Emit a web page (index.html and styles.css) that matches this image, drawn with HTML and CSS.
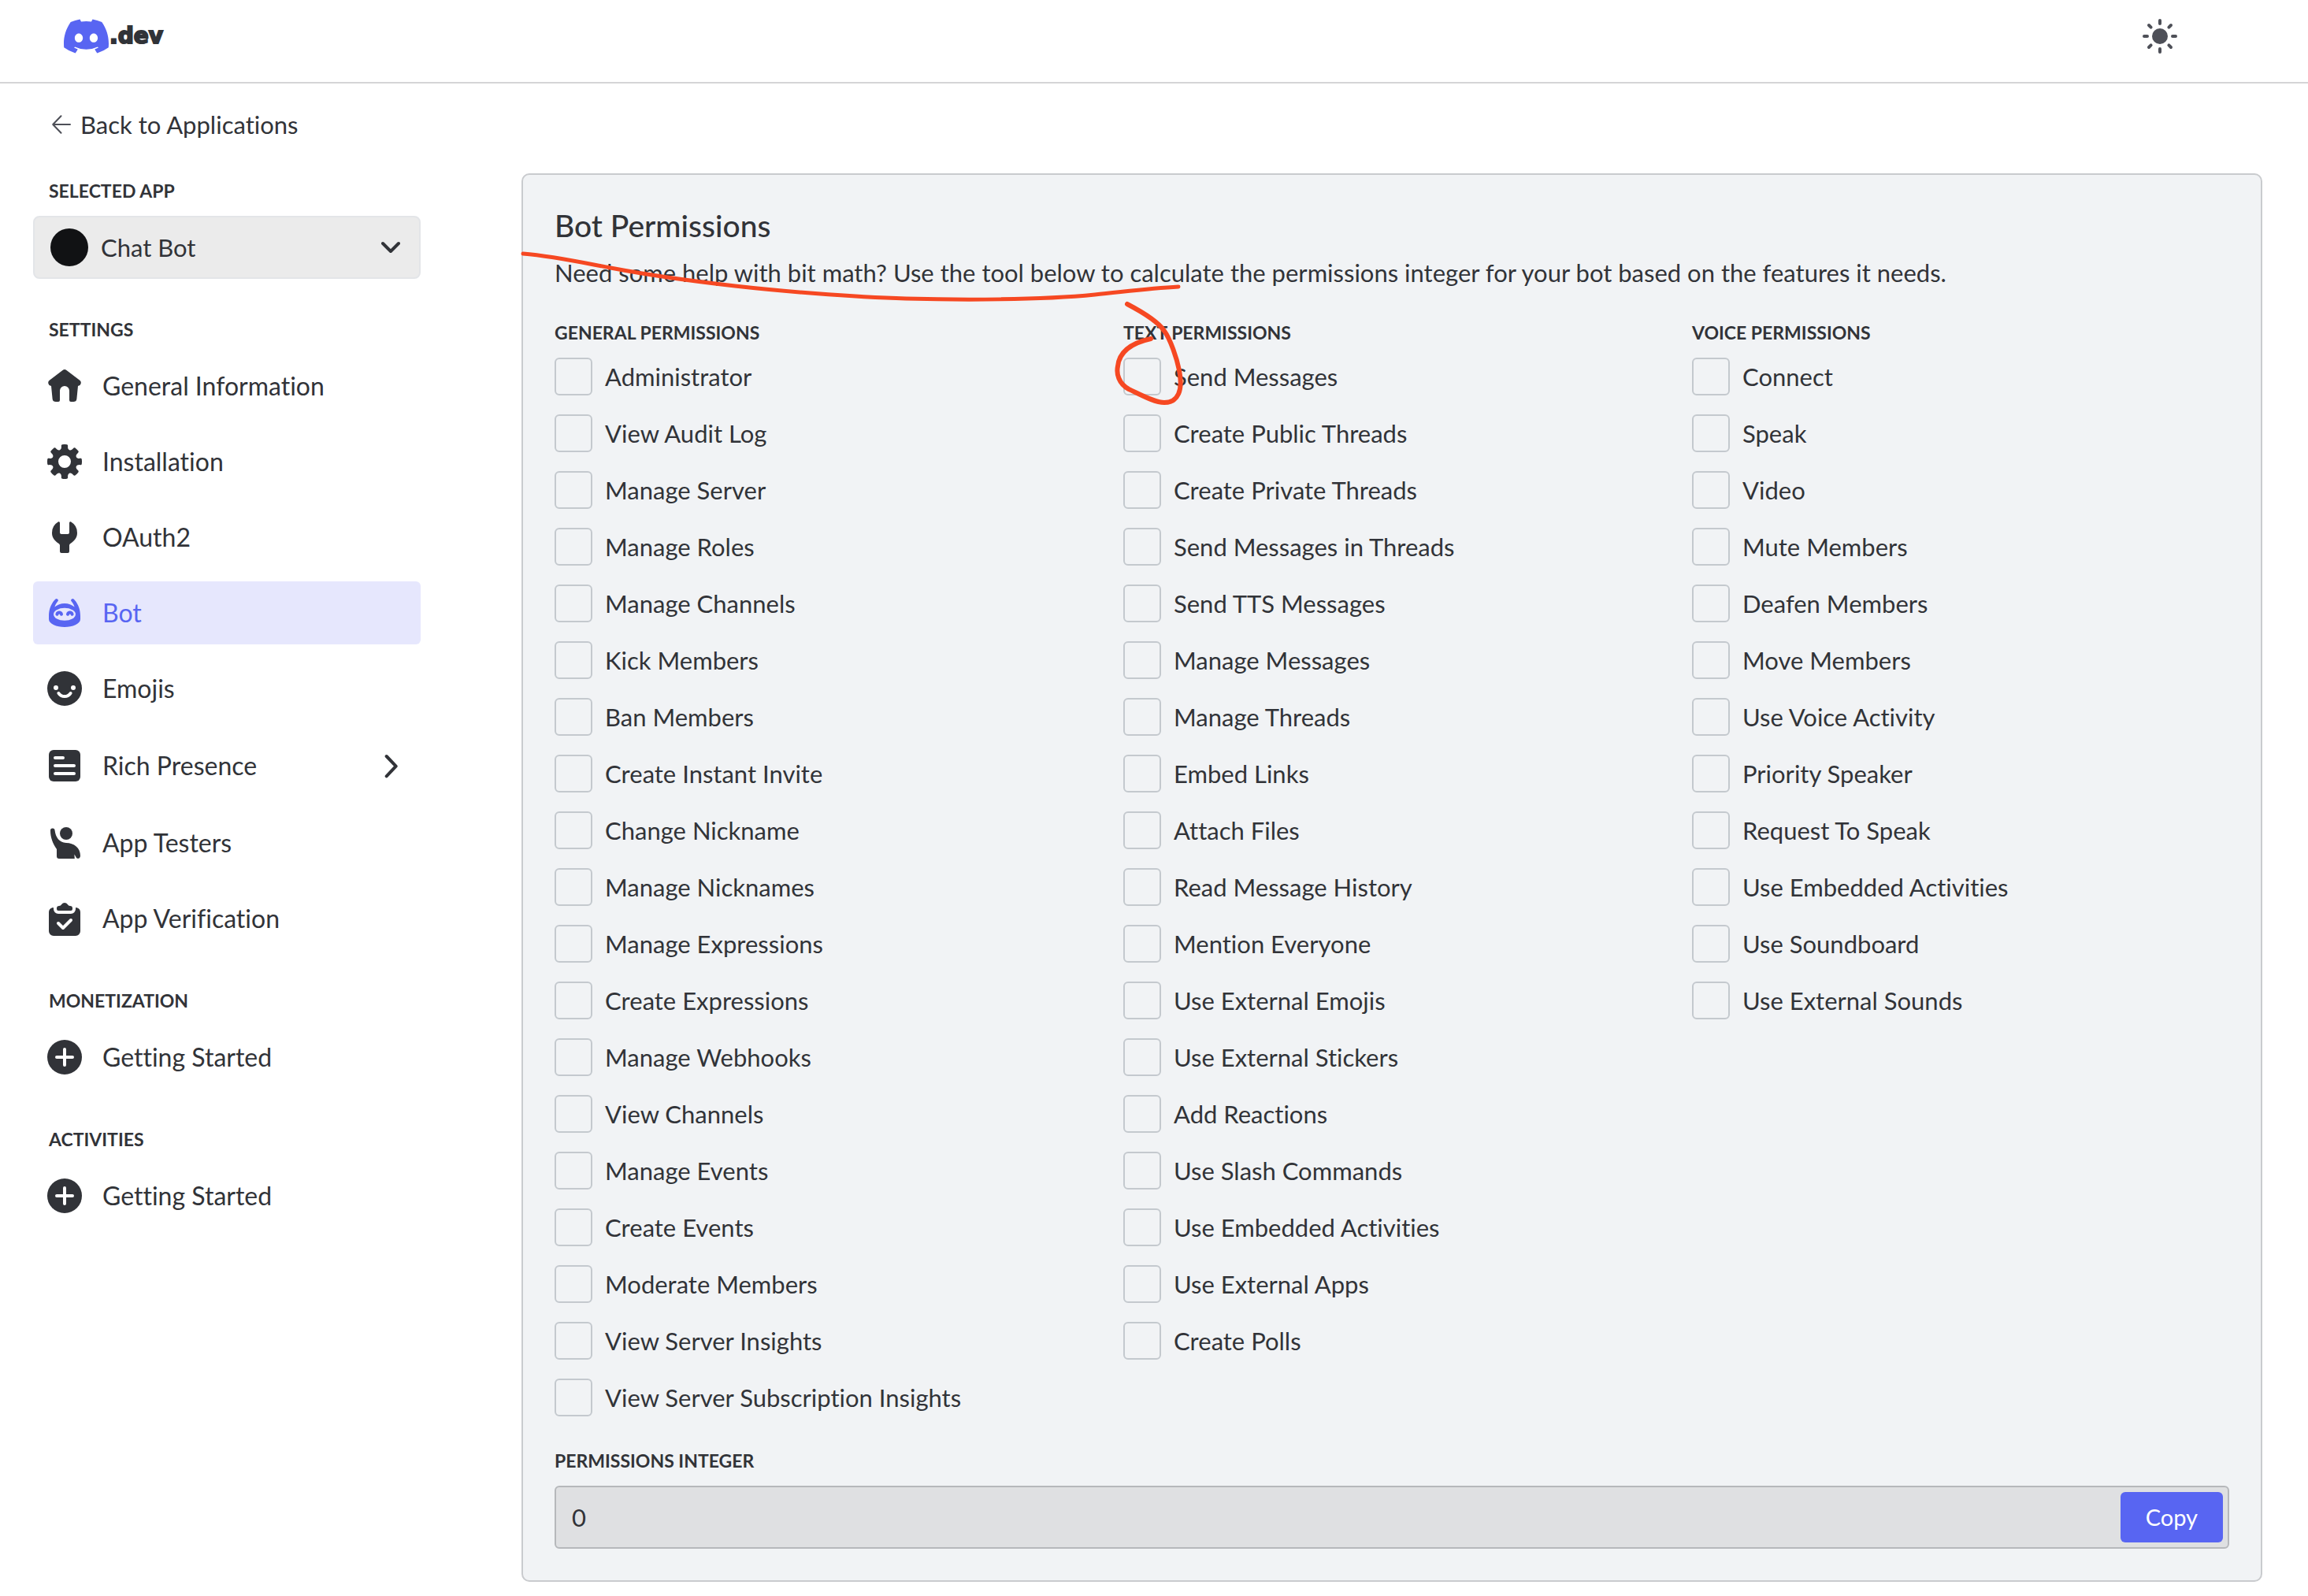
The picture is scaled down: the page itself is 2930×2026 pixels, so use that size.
FILE: index.html
```html
<!DOCTYPE html>
<html lang="en">
<head>
<meta charset="utf-8">
<meta name="viewport" content="width=device-width, initial-scale=1">
<title>Chat Bot – Bot settings</title>
<link rel="stylesheet" href="styles.css">
</head>
<body>
<header class="topbar">
  <a class="logo" href="#">
    <svg class="logo-mark" viewBox="0 0 127.14 96.36" aria-hidden="true"><path d="M107.7,8.07A105.15,105.15,0,0,0,81.47,0a72.06,72.06,0,0,0-3.36,6.83A97.68,97.68,0,0,0,49,6.83,72.37,72.37,0,0,0,45.64,0,105.89,105.89,0,0,0,19.39,8.09C2.79,32.65-1.71,56.6.54,80.21h0A105.73,105.73,0,0,0,32.71,96.36,77.7,77.7,0,0,0,39.6,85.25a68.42,68.42,0,0,1-10.85-5.18c.91-.66,1.8-1.34,2.66-2a75.57,75.57,0,0,0,64.32,0c.87.71,1.76,1.39,2.66,2a68.68,68.68,0,0,1-10.87,5.19,77,77,0,0,0,6.89,11.1A105.25,105.25,0,0,0,126.6,80.22h0C129.24,52.84,122.09,29.11,107.7,8.07ZM42.45,65.69C36.18,65.69,31,60,31,53s5-12.74,11.43-12.74S54,46,53.89,53,48.84,65.69,42.45,65.69Zm42.24,0C78.41,65.69,73.25,60,73.25,53s5-12.74,11.44-12.74S96.23,46,96.12,53,91.08,65.69,84.69,65.69Z"/></svg>
    <span class="logo-text">.dev</span>
  </a>
  <button class="theme-button" type="button" aria-label="Toggle theme">
    <svg class="icon" viewBox="0 0 24 24"><circle cx="12" cy="12" r="5"/><path class="line" d="M12 2v2M12 20v2M2 12h2M20 12h2M5 5l1.3 1.3M17.7 17.7 19 19M19 5l-1.3 1.3M6.3 17.7 5 19"/></svg>
  </button>
</header>

<div class="layout">
  <nav class="sidebar">
    <a class="back" href="#">
      <svg class="back-icon" viewBox="0 0 24 24" aria-hidden="true"><path d="M11.5 1.2 1.2 12l10.3 10.8M1.2 12H23"/></svg>
      Back to Applications
    </a>

    <section class="nav-group">
      <label class="nav-heading" for="app">Selected App</label>
      <div class="app-picker">
        <span class="avatar"></span>
        <select class="app-select" id="app"><option>Chat Bot</option></select>
        <svg class="picker-arrow" viewBox="0 0 24 24" aria-hidden="true"><path d="m2 7 10 10L22 7"/></svg>
      </div>
    </section>

    <section class="nav-group">
      <h2 class="nav-heading">Settings</h2>
      <ul class="nav-list">
        <li><a class="nav-item" href="#"><svg class="icon" viewBox="0 0 24 24"><path d="m2.4 8.4 8.38-6.46a2 2 0 0 1 2.44 0l8.39 6.45a2 2 0 0 1-.79 3.54l-.32.07-.82 8.2a2 2 0 0 1-1.99 1.8H16a1 1 0 0 1-1-1v-6a3 3 0 0 0-6 0v6a1 1 0 0 1-1 1H6.31a2 2 0 0 1-1.99-1.8L3.5 12l-.32-.07a2 2 0 0 1-.78-3.54Z"/></svg>General Information</a></li>
        <li><a class="nav-item" href="#"><svg class="icon" viewBox="0 0 24 24"><path fill-rule="evenodd" d="M10.56 1.1c-.46.05-.7.53-.64.98.18 1.16-.19 2.2-.98 2.53-.8.33-1.79-.15-2.49-1.1-.27-.36-.78-.52-1.14-.24-.77.59-1.45 1.27-2.04 2.04-.28.36-.12.87.24 1.14.96.7 1.43 1.7 1.1 2.49-.33.8-1.37 1.16-2.53.98-.45-.07-.93.18-.99.64a11.1 11.1 0 0 0 0 2.88c.06.46.54.7.99.64 1.16-.18 2.2.19 2.53.98.33.8-.14 1.79-1.1 2.49-.36.27-.52.78-.24 1.14.59.77 1.27 1.45 2.04 2.04.36.28.87.12 1.14-.24.7-.95 1.7-1.43 2.49-1.1.8.33 1.16 1.37.98 2.53-.07.45.18.93.64.99a11.1 11.1 0 0 0 2.88 0c.46-.06.7-.54.64-.99-.18-1.16.19-2.2.98-2.53.8-.33 1.79.14 2.49 1.1.27.36.78.52 1.14.24.77-.59 1.45-1.27 2.04-2.04.28-.36.12-.87-.24-1.14-.96-.7-1.43-1.7-1.1-2.49.33-.8 1.37-1.16 2.53-.98.45.07.93-.18.99-.64a11.1 11.1 0 0 0 0-2.88c-.06-.46-.54-.7-.99-.64-1.16.18-2.2-.19-2.53-.98-.33-.8.14-1.79 1.1-2.49.36-.27.52-.78.24-1.14a11.07 11.07 0 0 0-2.04-2.04c-.36-.28-.87-.12-1.14.24-.7.96-1.7 1.43-2.49 1.1-.8-.33-1.16-1.37-.98-2.53.07-.45-.18-.93-.64-.99a11.1 11.1 0 0 0-2.88 0ZM16 12a4 4 0 1 1-8 0 4 4 0 0 1 8 0Z"/></svg>Installation</a></li>
        <li><a class="nav-item" href="#"><svg class="icon" viewBox="0 0 24 24"><path d="M9 2.9c0-.6-.6-1-1.1-.7A8 8 0 0 0 4 9.2c0 3 1.7 5 4.3 6.8.4.3.7.7.7 1.2V21a1 1 0 0 0 1 1h4a1 1 0 0 0 1-1v-3.8c0-.5.3-.9.7-1.2C18.3 14.2 20 12.2 20 9.2a8 8 0 0 0-3.9-7c-.5-.3-1.1.1-1.1.7V9a1 1 0 0 1-1 1h-4a1 1 0 0 1-1-1Z"/></svg>OAuth2</a></li>
        <li><a class="nav-item nav-item-active" href="#" aria-current="page"><svg class="icon" viewBox="0 0 24 24"><path d="M2 14C2 10 3.3 6.2 6.1 3.4a1 1 0 0 1 1.6 1.2C6.8 5.6 6 7 5.7 8.3 7.3 6.9 9.6 6 12 6s4.7.9 6.3 2.3C18 7 17.2 5.6 16.3 4.6a1 1 0 0 1 1.6-1.2C20.7 6.2 22 10 22 14v2c0 3-5 5-10 5S2 19 2 16Z"/><ellipse class="cutout" cx="12" cy="12.9" rx="7" ry="4"/><path class="line" d="M7.2 12.9c.4-1.5 2.4-1.5 2.8 0M14 12.9c.4-1.5 2.4-1.5 2.8 0"/></svg>Bot</a></li>
        <li><a class="nav-item" href="#"><svg class="icon" viewBox="0 0 24 24"><circle cx="12" cy="12" r="11"/><g class="cutout"><circle cx="6.5" cy="11.5" r="1.5"/><circle cx="17.5" cy="11.5" r="1.5"/></g><path class="cutout-line" d="M8.2 15c1.7 2.7 5.9 2.7 7.6 0"/></svg>Emojis</a></li>
        <li><a class="nav-item nav-item-tall" href="#"><svg class="icon" viewBox="0 0 24 24"><rect x="2" y="2" width="20" height="20" rx="3"/><path class="cutout-line" d="M6 7h5M6 12h12M6 17h12"/></svg>Rich Presence<svg class="chevron" viewBox="0 0 24 24" aria-hidden="true"><path d="m8 3 9 9.500-9 9.500"/></svg></a></li>
        <li><a class="nav-item" href="#"><svg class="icon" viewBox="0 0 24 24"><circle cx="13" cy="6" r="4"/><path d="M3 4.3a1.4 1.4 0 0 1 2.8-.2C6.3 8.3 8.6 11.8 13 12c5 0 9 3.3 9 8.1 0 2.1-2.4 2.5-2.9.6l-.9-1.5.2 2.8H8.5A1.5 1.5 0 0 1 7 20.5V16C4.5 12.5 3 8.5 3 4.3Z"/></svg>App Testers</a></li>
        <li><a class="nav-item" href="#"><svg class="icon" viewBox="0 0 24 24"><path d="M8 7h8a1 1 0 0 0 1-1v-.5A1.5 1.5 0 0 0 15.5 4c-.8 0-1.2-.4-1.6-1a2.3 2.3 0 0 0-3.8 0c-.4.6-.8 1-1.6 1A1.5 1.5 0 0 0 7 5.5V6a1 1 0 0 0 1 1Z"/><path d="M4.3 5.1c.4-.2.7.1.7.5V6a3 3 0 0 0 3 3h8a3 3 0 0 0 3-3v-.4c0-.4.3-.7.7-.5A3 3 0 0 1 22 8v12a3 3 0 0 1-3 3H5a3 3 0 0 1-3-3V8a3 3 0 0 1 2.3-2.9Z"/><path class="cutout-line" d="m8 15 3 3 5-5"/></svg>App Verification</a></li>
      </ul>
    </section>

    <section class="nav-group">
      <h2 class="nav-heading">Monetization</h2>
      <ul class="nav-list">
        <li><a class="nav-item" href="#"><svg class="icon" viewBox="0 0 24 24"><circle cx="12" cy="12" r="11"/><path class="cutout-line" d="M12 7v10M7 12h10"/></svg>Getting Started</a></li>
      </ul>
    </section>

    <section class="nav-group">
      <h2 class="nav-heading">Activities</h2>
      <ul class="nav-list">
        <li><a class="nav-item" href="#"><svg class="icon" viewBox="0 0 24 24"><circle cx="12" cy="12" r="11"/><path class="cutout-line" d="M12 7v10M7 12h10"/></svg>Getting Started</a></li>
      </ul>
    </section>
  </nav>

  <main class="card">
    <h1 class="card-title">Bot Permissions</h1>
    <p class="card-text">Need some help with bit math? Use the tool below to calculate the permissions integer for your bot based on the features it needs.</p>

    <div class="permissions">
      <fieldset class="column">
        <legend class="label">General Permissions</legend>
        <label class="check"><input type="checkbox">Administrator</label>
        <label class="check"><input type="checkbox">View Audit Log</label>
        <label class="check"><input type="checkbox">Manage Server</label>
        <label class="check"><input type="checkbox">Manage Roles</label>
        <label class="check"><input type="checkbox">Manage Channels</label>
        <label class="check"><input type="checkbox">Kick Members</label>
        <label class="check"><input type="checkbox">Ban Members</label>
        <label class="check"><input type="checkbox">Create Instant Invite</label>
        <label class="check"><input type="checkbox">Change Nickname</label>
        <label class="check"><input type="checkbox">Manage Nicknames</label>
        <label class="check"><input type="checkbox">Manage Expressions</label>
        <label class="check"><input type="checkbox">Create Expressions</label>
        <label class="check"><input type="checkbox">Manage Webhooks</label>
        <label class="check"><input type="checkbox">View Channels</label>
        <label class="check"><input type="checkbox">Manage Events</label>
        <label class="check"><input type="checkbox">Create Events</label>
        <label class="check"><input type="checkbox">Moderate Members</label>
        <label class="check"><input type="checkbox">View Server Insights</label>
        <label class="check"><input type="checkbox">View Server Subscription Insights</label>
      </fieldset>
      <fieldset class="column">
        <legend class="label">Text Permissions</legend>
        <label class="check"><input type="checkbox">Send Messages</label>
        <label class="check"><input type="checkbox">Create Public Threads</label>
        <label class="check"><input type="checkbox">Create Private Threads</label>
        <label class="check"><input type="checkbox">Send Messages in Threads</label>
        <label class="check"><input type="checkbox">Send TTS Messages</label>
        <label class="check"><input type="checkbox">Manage Messages</label>
        <label class="check"><input type="checkbox">Manage Threads</label>
        <label class="check"><input type="checkbox">Embed Links</label>
        <label class="check"><input type="checkbox">Attach Files</label>
        <label class="check"><input type="checkbox">Read Message History</label>
        <label class="check"><input type="checkbox">Mention Everyone</label>
        <label class="check"><input type="checkbox">Use External Emojis</label>
        <label class="check"><input type="checkbox">Use External Stickers</label>
        <label class="check"><input type="checkbox">Add Reactions</label>
        <label class="check"><input type="checkbox">Use Slash Commands</label>
        <label class="check"><input type="checkbox">Use Embedded Activities</label>
        <label class="check"><input type="checkbox">Use External Apps</label>
        <label class="check"><input type="checkbox">Create Polls</label>
      </fieldset>
      <fieldset class="column">
        <legend class="label">Voice Permissions</legend>
        <label class="check"><input type="checkbox">Connect</label>
        <label class="check"><input type="checkbox">Speak</label>
        <label class="check"><input type="checkbox">Video</label>
        <label class="check"><input type="checkbox">Mute Members</label>
        <label class="check"><input type="checkbox">Deafen Members</label>
        <label class="check"><input type="checkbox">Move Members</label>
        <label class="check"><input type="checkbox">Use Voice Activity</label>
        <label class="check"><input type="checkbox">Priority Speaker</label>
        <label class="check"><input type="checkbox">Request To Speak</label>
        <label class="check"><input type="checkbox">Use Embedded Activities</label>
        <label class="check"><input type="checkbox">Use Soundboard</label>
        <label class="check"><input type="checkbox">Use External Sounds</label>
      </fieldset>
    </div>

    <label class="label" for="integer">Permissions Integer</label>
    <div class="copy-field">
      <input class="copy-input" id="integer" type="text" value="0" readonly>
      <button class="copy-button" type="button">Copy</button>
    </div>

    <svg class="pen-marks" viewBox="654 302 860 230" aria-hidden="true">
      <path class="underline" d="M664 322C701 325 738 333 775 340S880 357 933 363S1080 377 1150 379S1320 381 1390 374C1430 370 1460 366 1496 364"/>
      <path class="loop" d="M1431 386C1452 397 1470 408 1478 420C1486 431 1494 455 1497 470C1502 495 1496 511 1478 511C1466 511 1448 501 1433 494C1420 487 1417 474 1419 465C1421 445 1438 435 1461 430"/>
    </svg>
  </main>
</div>
</body>
</html>
```
FILE: styles.css
```css
:root {
  --text: #313338;
  --muted: #4e5058;
  --brand: #5865f2;
  --page: #ffffff;
  --panel: #f1f3f5;
}

* {
  box-sizing: border-box;
}

body {
  margin: 0;
  background: var(--page);
  color: var(--text);
  font-family: Lato, "Open Sans", sans-serif;
  font-size: 31px;
  font-variant-ligatures: none;
  line-height: 40px;
}

h1, h2, p, ul {
  margin: 0;
  padding: 0;
}

ul {
  list-style: none;
}

a {
  color: inherit;
  text-decoration: none;
}

button, input, select {
  font: inherit;
  color: inherit;
}

svg {
  flex: none;
  fill: none;
  stroke-linecap: round;
  stroke-linejoin: round;
}

/* Top bar */
.topbar {
  display: flex;
  align-items: center;
  justify-content: space-between;
  height: 106px;
  padding: 0 164px 12px 81px;
  border-bottom: 2px solid #d5d5d6;
}

.logo {
  display: flex;
  align-items: center;
  gap: 1px;
}

.logo-mark {
  width: 57px;
  height: 44px;
  fill: var(--brand);
}

.logo-text {
  font-family: "DejaVu Sans", sans-serif;
  font-size: 28px;
  font-weight: 700;
  -webkit-text-stroke: 2px var(--text);
}

.theme-button {
  display: flex;
  padding: 0;
  border: 0;
  background: none;
  color: var(--muted);
}

.icon {
  width: 48px;
  height: 48px;
  fill: currentColor;
}

.icon .line {
  fill: none;
  stroke: currentColor;
  stroke-width: 2;
}

.icon .cutout {
  fill: var(--cutout, var(--page));
}

.icon .cutout-line {
  fill: none;
  stroke: var(--cutout, var(--page));
  stroke-width: 2;
}

/* Page columns */
.layout {
  display: grid;
  grid-template-columns: 492px minmax(0, 1fr);
  align-items: start;
  gap: 128px;
  padding: 0 58px 18px 42px;
}

/* Sidebar */
.sidebar {
  display: flex;
  flex-direction: column;
  gap: 48px;
  padding-top: 32px;
}

.back {
  display: flex;
  align-items: center;
  gap: 12px;
  padding-left: 24px;
}

.back-icon {
  width: 24px;
  height: 24px;
  stroke: var(--muted);
  stroke-width: 2;
}

.nav-group {
  display: flex;
  flex-direction: column;
  gap: 16px;
}

.nav-heading,
.label {
  display: block;
  font-size: 23px;
  font-weight: 700;
  line-height: 32px;
  text-transform: uppercase;
}

.nav-heading {
  padding-left: 20px;
}

.app-picker {
  display: flex;
  align-items: center;
  height: 80px;
  padding: 0 24px 0 20px;
  border: 2px solid #e3e5e8;
  border-radius: 8px;
  background: #ebebeb;
}

.avatar {
  width: 48px;
  height: 48px;
  border-radius: 50%;
  background: #111214;
}

.app-select {
  flex: 1;
  padding: 0 0 0 16px;
  border: 0;
  appearance: none;
  background: none;
}

.picker-arrow {
  width: 24px;
  height: 24px;
  stroke: var(--text);
  stroke-width: 4;
}

.nav-list {
  display: flex;
  flex-direction: column;
  gap: 16px;
}

.nav-item {
  display: flex;
  align-items: center;
  gap: 24px;
  height: 80px;
  padding: 0 14px 0 16px;
  border-radius: 6px;
  font-size: 32px;
}

.nav-item-tall {
  height: 84px;
}

.nav-item-active {
  --cutout: #e6e7fd;
  background: #e6e7fd;
  color: var(--brand);
}

.chevron {
  width: 48px;
  height: 32px;
  margin-left: auto;
  stroke: var(--text);
  stroke-width: 3;
}

/* Permissions card */
.card {
  position: relative;
  margin-top: 114px;
  padding: 40px;
  border: 2px solid #c9cbce;
  border-radius: 10px;
  background: var(--panel);
}

.card-title {
  margin-bottom: 12px;
  font-size: 39px;
  font-weight: 500;
  line-height: 48px;
}

.card-text {
  line-height: 48px;
}

.permissions {
  display: grid;
  grid-template-columns: repeat(3, minmax(0, 1fr));
  gap: 40px;
  margin: 36px 0 40px;
}

.column {
  display: flex;
  flex-direction: column;
  gap: 24px;
  min-width: 0;
  margin: 0;
  padding: 0;
  border: 0;
}

.column .label {
  margin-bottom: 16px;
  padding: 0;
}

.check {
  display: flex;
  align-items: center;
  gap: 16px;
  line-height: 48px;
}

.check input {
  width: 48px;
  height: 48px;
  margin: 0;
  border: 2px solid #c4c9ce;
  border-radius: 6px;
  appearance: none;
}

.check input:checked {
  background: var(--brand);
}

.copy-field {
  display: flex;
  height: 80px;
  margin-top: 16px;
  padding: 6px;
  border: 2px solid #b6b8bb;
  border-radius: 6px;
  background: #dfe0e2;
}

.copy-input {
  flex: 1;
  min-width: 0;
  padding: 0 14px;
  border: 0;
  background: none;
}

.copy-button {
  padding: 0 32px;
  border: 0;
  border-radius: 6px;
  background: var(--brand);
  color: #ffffff;
  font-size: 29px;
}

.pen-marks {
  position: absolute;
  top: 80px;
  left: -10px;
  width: 860px;
  height: 230px;
  stroke: #f64822;
  pointer-events: none;
}

.underline {
  stroke-width: 5;
}

.loop {
  stroke-width: 6;
}
```
